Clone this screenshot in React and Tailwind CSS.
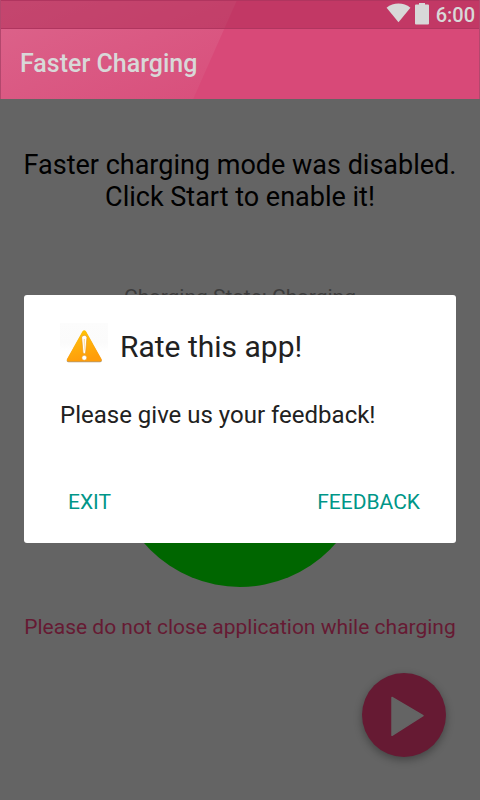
function WifiIcon() {
  return (
    <svg viewBox="0 0 26 20" className="h-5 w-[25px]" fill="#d8d8d8" aria-hidden="true">
      <path d="M.6 4.600C4.200 1.600 8.500.2 13 .2s8.800 1.400 12.400 4.400L13 19.600z" />
    </svg>
  )
}

function BatteryIcon() {
  return (
    <svg viewBox="0 0 14 22" className="h-[22px] w-3.5" fill="#d8d8d8" aria-hidden="true">
      <path d="M4 0h6v1.600h3q1 0 1 1V20.500q0 1-1 1H1q-1 0-1-1V2.600q0-1 1-1h3z" />
    </svg>
  )
}

function WarningIcon() {
  return (
    <svg viewBox="0 0 48 48" className="size-12 shrink-0" aria-hidden="true">
      <defs>
        <linearGradient id="warn-bg" x1="0" y1="0" x2="0" y2="1">
          <stop offset="0" stopColor="#fcfcfc" />
          <stop offset="0.7" stopColor="#fbfbfb" />
          <stop offset="1" stopColor="#ffffff" />
        </linearGradient>
        <linearGradient id="warn-fill" x1="0" y1="0" x2="0.3" y2="1">
          <stop offset="0" stopColor="#ffc800" />
          <stop offset="0.5" stopColor="#ffb10c" />
          <stop offset="1" stopColor="#ff9d0a" />
        </linearGradient>
      </defs>
      <path d="M0 0h48v28H0z" fill="url(#warn-bg)" />
      <path d="M22.400 9.200q1.900-2.400 3.700 0l15.400 27.600q.9 2.300-1.500 2.500H8.500q-2.400-.2-1.500-2.500z" fill="#a8987f" />
      <path d="M22.400 8.500q1.900-2.400 3.700 0l15.400 27.600q.9 2.300-1.500 2.500H8.500q-2.400-.2-1.500-2.500z" fill="url(#warn-fill)" />
      <path d="M21.600 14q2.700-3.400 5.400 0l-1.400 16q-1.300 1.600-2.600 0z" fill="#fff" stroke="#e59a20" strokeWidth=".7" />
      <path d="M23.700 16h1.200l-.4 11.500h-.4z" fill="#ffd68a" />
      <circle cx="24.300" cy="34.800" r="2.500" fill="#fff" stroke="#e59a20" strokeWidth=".6" />
    </svg>
  )
}

function TopBar() {
  return (
    <header className="relative border-x border-[#b3476d] bg-[#d84978] text-[#d8d8d8]">
      {/* Diagonal sheen across both bars */}
      <svg
        viewBox="0 0 240 99"
        preserveAspectRatio="none"
        className="absolute inset-y-0 left-0 h-full w-1/2"
        aria-hidden="true"
      >
        <defs>
          <linearGradient id="sheen" x1="0" y1="0" x2="1" y2="1">
            <stop offset="0" stopColor="#dc648b" />
            <stop offset="1" stopColor="#d84e7b" />
          </linearGradient>
        </defs>
        <path d="M0 0h237L193 99H0z" fill="url(#sheen)" />
      </svg>
      <div className="relative flex h-[29px] items-start justify-end border-y border-[#b0355f] bg-[#ac2852]/50 pt-0.5 pr-1">
        <WifiIcon />
        <span className="ml-1">
          <BatteryIcon />
        </span>
        <span className="ml-[7px] text-xl leading-6 font-medium">6:00</span>
      </div>
      <h1 className="relative flex h-[70px] items-center pl-[19px] text-[25px] font-medium">Faster Charging</h1>
    </header>
  )
}

function RateDialog() {
  return (
    <div className="fixed inset-0 flex items-center justify-center px-6 pt-[38px]">
      <div
        role="dialog"
        aria-modal="true"
        aria-labelledby="rate-title"
        className="w-full rounded-[3px] bg-white px-9 pt-7 pb-4 text-[#212121]"
      >
        <div className="flex items-center gap-3">
          <WarningIcon />
          <h2 id="rate-title" className="text-[30px] leading-12">
            Rate this app!
          </h2>
        </div>
        <p className="mt-7 text-2xl leading-8">Please give us your feedback!</p>
        <div className="mt-12 flex justify-between">
          <button type="button" className="h-12 px-2 text-[21px] text-[#009688]">
            EXIT
          </button>
          <button type="button" className="h-12 text-[21px] text-[#009688]">
            FEEDBACK
          </button>
        </div>
      </div>
    </div>
  )
}

function App() {
  return (
    <div className="flex min-h-screen flex-col bg-[#646464] font-[Roboto,sans-serif]">
      <TopBar />
      <main className="flex grow flex-col items-center text-center">
        <p className="mt-[50px] text-[27px] leading-8 text-black">
          Faster charging mode was disabled.
          <br />
          Click Start to enable it!
        </p>
        <p className="mt-[70px] text-[21px] leading-7 text-[#3c3c3c]">Charging State: Charging</p>
        <div className="mt-[22px] size-[254px] rounded-full bg-[#006600]" />
        <p className="mt-[26px] text-[21px] leading-7 text-[#661a33]">
          Please do not close application while charging
        </p>
        <button
          type="button"
          aria-label="Start"
          className="mt-8 mr-[34px] flex size-[84px] items-center justify-center self-end rounded-full bg-[#661a33] shadow-[0_3px_8px_#00000055]"
        >
          <svg viewBox="0 0 84 84" className="size-full" aria-hidden="true">
            <path d="M30 24.500L61 42.600 30 62.300z" fill="#646464" stroke="#646464" strokeWidth="1.500" strokeLinejoin="round" />
          </svg>
        </button>
      </main>
      <RateDialog />
    </div>
  )
}

export default App
